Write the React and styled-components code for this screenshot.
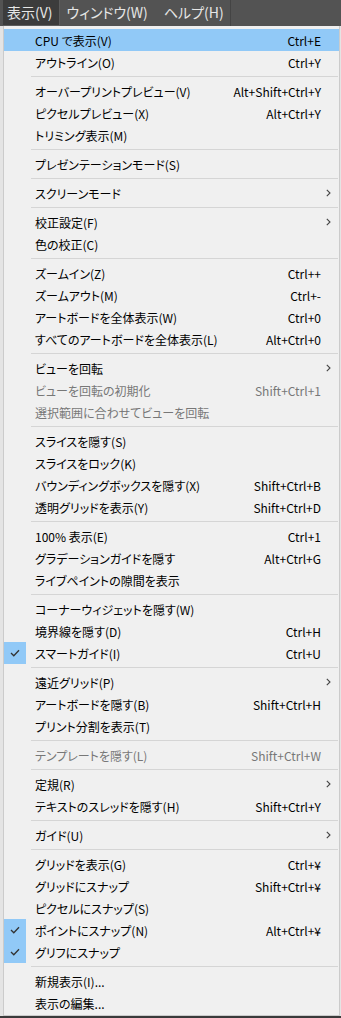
import React from 'react'
import styled, { createGlobalStyle } from 'styled-components'

const GlobalStyle = createGlobalStyle`
  body { margin: 0; background: #3a3a3a; }
  * { box-sizing: border-box; }
`;

const FONT = `"Noto Sans CJK JP", "Noto Sans", sans-serif`;

const Screen = styled.div`width:341px;height:1018px;display:flex;flex-direction:column;background:#3a3a3a;overflow:hidden;font-family:${FONT};font-feature-settings:"palt";`;
const MenuBar = styled.div`height:26px;flex:none;display:flex;background:#535353;`;
const BarItems = styled.div`display:flex;align-items:stretch;flex:none;width:231px;border-right:1px solid #444;padding-left:3px;`;
const BarItem = styled.div`flex:none;display:flex;align-items:center;white-space:nowrap;line-height:1;padding:0 6px 1px 4px;font-size:14px;color:#e6e6e6;
  background:${p => (p.$active ? '#3c3c3c' : 'transparent')};
  border-right:1px solid ${p => (p.$active ? '#5c5c5c' : 'transparent')};
  border-bottom:1px solid ${p => (p.$active ? '#5c5c5c' : 'transparent')};
  margin-right:${p => (p.$active ? '3px' : '5px')};`;
const Stage = styled.div`height:990px;flex:none;display:flex;background:#e4e4e4;padding-left:3px;`;
const Menu = styled.div`width:337px;height:990px;background:#f0f0f0;border:1px solid #cbcbcb;border-top:none;padding:3px 0 1px 0;display:flex;flex-direction:column;`;
const Row = styled.div`height:22px;display:grid;grid-template-columns:31px 1fr auto 18px;align-items:center;font-size:12px;
  color:${p => (p.$disabled ? '#777' : '#000')};
  background:${p => (p.$active ? '#91c9f7' : 'transparent')};`;
const CheckBox = styled.div`width:22px;height:22px;display:flex;align-items:center;justify-content:center;
  background:${p => (p.$on ? '#91c9f7' : 'transparent')};`;
const Label = styled.span`white-space:nowrap;`;
const Shortcut = styled.span`white-space:nowrap;text-align:right;`;
const Arrow = styled.div`display:flex;align-items:center;justify-content:flex-start;padding-left:5px;`;
const Separator = styled.div`height:1px;margin:3px 1px 3px 27px;background:#d5d5d5;`;

const groups = [
  [
    { label: 'CPU で表示(V)', key: 'Ctrl+E', active: true },
    { label: 'アウトライン(O)', key: 'Ctrl+Y' },
  ],
  [
    { label: 'オーバープリントプレビュー(V)', key: 'Alt+Shift+Ctrl+Y' },
    { label: 'ピクセルプレビュー(X)', key: 'Alt+Ctrl+Y' },
    { label: 'トリミング表示(M)' },
  ],
  [{ label: 'プレゼンテーションモード(S)' }],
  [{ label: 'スクリーンモード', sub: true }],
  [
    { label: '校正設定(F)', sub: true },
    { label: '色の校正(C)' },
  ],
  [
    { label: 'ズームイン(Z)', key: 'Ctrl++' },
    { label: 'ズームアウト(M)', key: 'Ctrl+-' },
    { label: 'アートボードを全体表示(W)', key: 'Ctrl+0' },
    { label: 'すべてのアートボードを全体表示(L)', key: 'Alt+Ctrl+0' },
  ],
  [
    { label: 'ビューを回転', sub: true },
    { label: 'ビューを回転の初期化', key: 'Shift+Ctrl+1', disabled: true },
    { label: '選択範囲に合わせてビューを回転', disabled: true },
  ],
  [
    { label: 'スライスを隠す(S)' },
    { label: 'スライスをロック(K)' },
    { label: 'バウンディングボックスを隠す(X)', key: 'Shift+Ctrl+B' },
    { label: '透明グリッドを表示(Y)', key: 'Shift+Ctrl+D' },
  ],
  [
    { label: '100% 表示(E)', key: 'Ctrl+1' },
    { label: 'グラデーションガイドを隠す', key: 'Alt+Ctrl+G' },
    { label: 'ライブペイントの隙間を表示' },
  ],
  [
    { label: 'コーナーウィジェットを隠す(W)' },
    { label: '境界線を隠す(D)', key: 'Ctrl+H' },
    { label: 'スマートガイド(I)', key: 'Ctrl+U', checked: true },
  ],
  [
    { label: '遠近グリッド(P)', sub: true },
    { label: 'アートボードを隠す(B)', key: 'Shift+Ctrl+H' },
    { label: 'プリント分割を表示(T)' },
  ],
  [{ label: 'テンプレートを隠す(L)', key: 'Shift+Ctrl+W', disabled: true }],
  [
    { label: '定規(R)', sub: true },
    { label: 'テキストのスレッドを隠す(H)', key: 'Shift+Ctrl+Y' },
  ],
  [{ label: 'ガイド(U)', sub: true }],
  [
    { label: 'グリッドを表示(G)', key: 'Ctrl+¥' },
    { label: 'グリッドにスナップ', key: 'Shift+Ctrl+¥' },
    { label: 'ピクセルにスナップ(S)' },
    { label: 'ポイントにスナップ(N)', key: 'Alt+Ctrl+¥', checked: true },
    { label: 'グリフにスナップ', checked: true },
  ],
  [
    { label: '新規表示(I)...' },
    { label: '表示の編集...' },
  ],
];

const Check = () => (
  <svg width="10" height="8" viewBox="0 0 10 8">
    <polyline points="1,4 3.8,6.8 9,1.2" fill="none" stroke="#333" strokeWidth="1.3" />
  </svg>
);

const Chevron = () => (
  <svg width="5" height="8" viewBox="0 0 5 8">
    <polyline points="0.8,0.8 4,4 0.8,7.2" fill="none" stroke="#444" strokeWidth="1.1" />
  </svg>
);

const MenuRow = ({ item }) => (
  <Row $active={item.active} $disabled={item.disabled}>
    <CheckBox $on={item.checked}>{item.checked && <Check />}</CheckBox>
    <Label>{item.label}</Label>
    <Shortcut>{item.key}</Shortcut>
    <Arrow>{item.sub && <Chevron />}</Arrow>
  </Row>
);

export default function App() {
  return (
    <Screen>
      <GlobalStyle />
      <MenuBar>
        <BarItems>
          <BarItem $active>表示(V)</BarItem>
          <BarItem>ウィンドウ(W)</BarItem>
          <BarItem>ヘルプ(H)</BarItem>
        </BarItems>
      </MenuBar>
      <Stage>
        <Menu>
          {groups.map((g, i) => (
            <React.Fragment key={i}>
              {i > 0 && <Separator />}
              {g.map(item => <MenuRow key={item.label} item={item} />)}
            </React.Fragment>
          ))}
        </Menu>
      </Stage>
    </Screen>
  );
}
